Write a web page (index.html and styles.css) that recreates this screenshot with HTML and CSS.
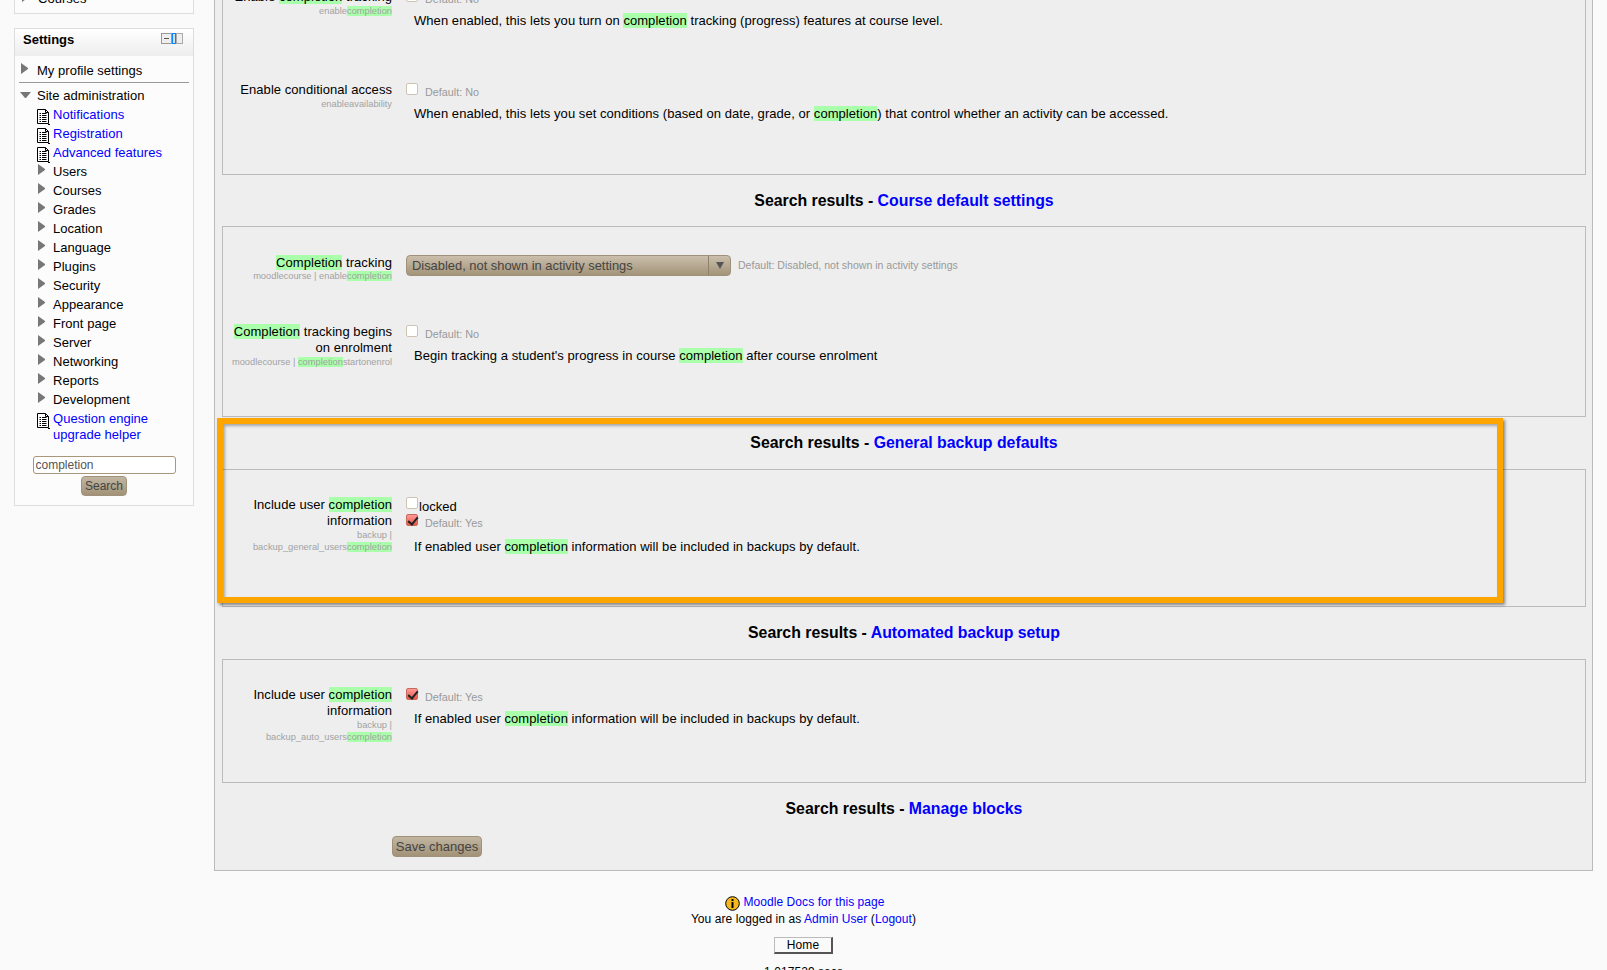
FILE: index.html
```html
<!DOCTYPE html>
<html lang="en">
<head>
<meta charset="utf-8">
<title>Search results</title>
<link rel="stylesheet" href="styles.css">
</head>
<body>
<svg class="defs" width="0" height="0" aria-hidden="true">
  <defs>
    <symbol id="doc" viewBox="0 0 15 17">
      <path d="M1.5 1.5H9.5L12.5 4.5V15.5H1.5Z" fill="#fff" stroke="#000" stroke-width="1"/>
      <path d="M9.5 1.5V4.5H12.5" fill="none" stroke="#000" stroke-width="1"/>
      <path d="M3.5 5.5H5M6 5.5H10.5M3.5 7.5H5M6 7.5H10.5M3.5 9.5H5M6 9.5H10.5M3.5 11.5H5M6 11.5H10.5M3.5 13.5H5M6 13.5H10.5" stroke="#000" stroke-width="1"/>
      <path d="M12 16.5H14" fill="none" stroke="#000" stroke-width="1"/>
    </symbol>
  </defs>
</svg>
<div class="page">
  <div class="columns">
    <aside class="sidebar">
      <section class="block nav-block">
        <div class="tree-row top"><span class="arrow"></span><span>Courses</span></div>
      </section>
      <section class="block settings">
        <header class="block-head">
          <h2>Settings</h2>
          <svg class="dock" width="23" height="12" viewBox="0 0 23 12">
            <rect x="0.5" y="0.5" width="10" height="10" fill="#eee" stroke="#999"/>
            <path d="M3 5.5H8" stroke="#555"/>
            <rect x="11.5" y="0.5" width="3" height="10" fill="#cde" stroke="#0a84ff"/>
            <rect x="15.5" y="0.5" width="6" height="10" fill="#eee" stroke="#aaa"/>
          </svg>
        </header>
        <div class="block-body">
          <div class="tree-row top"><span class="arrow"></span><span>My profile settings</span></div>
          <hr class="tree-sep">
          <div class="tree-row top"><span class="arrow open"></span><span>Site administration</span></div>
          <div class="tree-row child"><svg class="doc-icon"><use href="#doc"/></svg><a href="#">Notifications</a></div>
          <div class="tree-row child"><svg class="doc-icon"><use href="#doc"/></svg><a href="#">Registration</a></div>
          <div class="tree-row child"><svg class="doc-icon"><use href="#doc"/></svg><a href="#">Advanced features</a></div>
          <div class="tree-row child"><span class="arrow"></span><span>Users</span></div>
          <div class="tree-row child"><span class="arrow"></span><span>Courses</span></div>
          <div class="tree-row child"><span class="arrow"></span><span>Grades</span></div>
          <div class="tree-row child"><span class="arrow"></span><span>Location</span></div>
          <div class="tree-row child"><span class="arrow"></span><span>Language</span></div>
          <div class="tree-row child"><span class="arrow"></span><span>Plugins</span></div>
          <div class="tree-row child"><span class="arrow"></span><span>Security</span></div>
          <div class="tree-row child"><span class="arrow"></span><span>Appearance</span></div>
          <div class="tree-row child"><span class="arrow"></span><span>Front page</span></div>
          <div class="tree-row child"><span class="arrow"></span><span>Server</span></div>
          <div class="tree-row child"><span class="arrow"></span><span>Networking</span></div>
          <div class="tree-row child"><span class="arrow"></span><span>Reports</span></div>
          <div class="tree-row child"><span class="arrow"></span><span>Development</span></div>
          <div class="tree-row child wrap"><svg class="doc-icon"><use href="#doc"/></svg><a href="#">Question engine<br>upgrade helper</a></div>
          <form class="side-search">
            <input class="side-input" type="text" value="completion">
            <button class="btn small" type="button">Search</button>
          </form>
        </div>
      </section>
    </aside>

    <main class="panel">
      <fieldset class="group">
        <div class="setting h93">
          <div class="label"><span class="name">Enable <mark>completion</mark> tracking</span><span class="sub">enable<mark>completion</mark></span></div>
          <div class="control">
            <div class="ctl-line"><input type="checkbox" class="cb"><span class="default">Default: No</span></div>
            <p class="desc">When enabled, this lets you turn on <mark>completion</mark> tracking (progress) features at course level.</p>
          </div>
        </div>
        <div class="setting h92">
          <div class="label"><span class="name">Enable conditional access</span><span class="sub">enableavailability</span></div>
          <div class="control">
            <div class="ctl-line"><input type="checkbox" class="cb"><span class="default">Default: No</span></div>
            <p class="desc">When enabled, this lets you set conditions (based on date, grade, or <mark>completion</mark>) that control whether an activity can be accessed.</p>
          </div>
        </div>
      </fieldset>

      <h3 class="result-head">Search results - <a href="#">Course default settings</a></h3>
      <fieldset class="group">
        <div class="setting h70">
          <div class="label"><span class="name"><mark>Completion</mark> tracking</span><span class="sub">moodlecourse | enable<mark>completion</mark></span></div>
          <div class="control">
            <div class="ctl-line select-line">
              <div class="select"><span class="select-text">Disabled, not shown in activity settings</span><span class="select-arrow"></span></div>
              <span class="default">Default: Disabled, not shown in activity settings</span>
            </div>
          </div>
        </div>
        <div class="setting h92">
          <div class="label"><span class="name"><mark>Completion</mark> tracking begins on enrolment</span><span class="sub">moodlecourse | <mark>completion</mark>startonenrol</span></div>
          <div class="control">
            <div class="ctl-line"><input type="checkbox" class="cb"><span class="default">Default: No</span></div>
            <p class="desc">Begin tracking a student's progress in course <mark>completion</mark> after course enrolment</p>
          </div>
        </div>
      </fieldset>

      <h3 class="result-head tall">Search results - <a href="#">General backup defaults</a></h3>
      <fieldset class="group">
        <div class="setting h109">
          <div class="label"><span class="name">Include user <mark>completion</mark> information</span><span class="sub">backup | backup_general_users<mark>completion</mark></span></div>
          <div class="control">
            <div class="locked-line"><input type="checkbox" class="cb"><span>locked</span></div>
            <div class="ctl-line after-locked"><input type="checkbox" class="cb on" checked><span class="default">Default: Yes</span></div>
            <p class="desc">If enabled user <mark>completion</mark> information will be included in backups by default.</p>
          </div>
        </div>
      </fieldset>

      <h3 class="result-head tall">Search results - <a href="#">Automated backup setup</a></h3>
      <fieldset class="group">
        <div class="setting h95">
          <div class="label"><span class="name">Include user <mark>completion</mark> information</span><span class="sub">backup | backup_auto_users<mark>completion</mark></span></div>
          <div class="control">
            <div class="ctl-line"><input type="checkbox" class="cb on" checked><span class="default">Default: Yes</span></div>
            <p class="desc">If enabled user <mark>completion</mark> information will be included in backups by default.</p>
          </div>
        </div>
      </fieldset>

      <h3 class="result-head">Search results - <a href="#">Manage blocks</a></h3>
      <div class="submit-row"><button class="btn save" type="button">Save changes</button></div>

      <div class="highlight-frame"></div>
    </main>
  </div>

  <footer class="footer">
    <div class="foot-line docs">
      <svg class="info" width="15" height="15" viewBox="0 0 15 15">
        <circle cx="7.5" cy="7.5" r="6.8" fill="#f5b81e" stroke="#000" stroke-width="1"/>
        <rect x="6.5" y="3" width="2" height="2" fill="#000"/>
        <rect x="6.5" y="6" width="2" height="6" fill="#000"/>
      </svg><a href="#">Moodle Docs for this page</a>
    </div>
    <div class="foot-line">You are logged in as <a href="#">Admin User</a> (<a href="#">Logout</a>)</div>
    <div class="home-wrap"><span class="home">Home</span></div>
    <div class="foot-line timing">1.017529 secs</div>
  </footer>
</div>
</body>
</html>
```
FILE: styles.css
```css
* { box-sizing: border-box; }
html, body { margin: 0; height: 970px; overflow: hidden; background: #fafafa; }
body { font-family: "Liberation Sans", Arial, sans-serif; font-size: 13px; color: #000; line-height: 16px; letter-spacing: .055px; }
.defs { position: absolute; }
a { color: #0000ff; text-decoration: none; }
mark { background: #aaffaa; color: inherit; }

.page { margin-top: -60px; }
.columns { display: flex; align-items: flex-start; }

/* sidebar */
.sidebar { width: 214px; flex: none; padding-left: 14px; padding-right: 20px; }
.block { border: 1px solid #ddd; background: #fcfcfc; }
.nav-block { height: 74px; padding: 48px 0 0 5px; margin-bottom: 14px; }
.settings { height: 478px; }
.block-head { height: 27px; display: flex; justify-content: space-between; padding: 3px 9px 0 8px; background: linear-gradient(#ffffff, #ededed); }
.block-head h2 { margin: 0; font-size: 13px; line-height: 15px; font-weight: bold; letter-spacing: 0; }
.dock { margin-top: 1px; flex: none; }
.block-body { padding: 5px 4px 0 4px; }
.tree-row { display: flex; align-items: flex-start; line-height: 19px; height: 19px; letter-spacing: .03px; }
.tree-row.top { padding-left: 2px; }
.tree-row.child { padding-left: 19px; }
.tree-row.wrap { height: 32px; line-height: 16px; padding-top: 2px; }
.tree-row .arrow { flex: none; width: 7px; height: 11px; margin-top: 2px; margin-right: 9px; border-left: 7px solid #777; border-top: 5.5px solid transparent; border-bottom: 5.5px solid transparent; }
.tree-row.child .arrow { margin-right: 8px; }
.tree-row .arrow.open { width: 11px; height: 6px; margin: 6px 6px 0 -1px; border-top: 6px solid #777; border-left: 5.5px solid transparent; border-right: 5.5px solid transparent; border-bottom: 0; }
.doc-icon { flex: none; width: 15px; height: 17px; margin: 3px 2px 0 -2px; }
.tree-row.wrap .doc-icon { margin-top: 1px; }
.tree-sep { border: 0; border-top: 1px solid #999; margin: 2px 0 3px 0; height: 0; }
.side-search { display: flex; flex-direction: column; align-items: center; padding-top: 15px; }
.side-input { width: 143px; height: 18px; margin: 0 0 2px 0; padding: 0 2px; border: 1px solid #a8977a; border-radius: 3px; background: #fff; font: 12px "Liberation Sans", Arial, sans-serif; color: #555; }

.btn { border: 1px solid #a0917a; border-radius: 4px; background: linear-gradient(#c2b6a2, #a29277); color: #444; font: 13px/19px "Liberation Sans", Arial, sans-serif; padding: 0; height: 21px; }
.btn.save { width: 90px; }
.btn.small { font-size: 12px; width: 46px; height: 20px; }

/* main */
.panel { position: relative; flex: none; width: 1379px; height: 931px; padding: 21px 6px 0 7px; background: #eeeeee; border: 1px solid #bbb; border-top: 0; }
.group { margin: 0; padding: 27px 0 0 0; border: 1px solid #bbb; min-width: 0; }
.result-head { margin: 0; height: 51px; padding-top: 17px; text-align: center; font-size: 15.85px; line-height: 18px; font-weight: bold; letter-spacing: 0; }
.result-head.tall { height: 52px; }
.setting { display: flex; }
.h93 { height: 93px; }
.h92 { height: 92px; }
.h70 { height: 70px; }
.h109 { height: 109px; }
.h95 { height: 95px; }
.label { flex: none; width: 162px; margin-left: 7px; margin-right: 14px; text-align: right; }
.name { display: block; }
.h70 .name { padding-top: 1px; margin-bottom: -1px; }
.sub { display: block; font-size: 9.3px; line-height: 12px; color: #a2a2a2; letter-spacing: 0; }
.control { flex: 1; min-width: 0; }
.ctl-line { display: flex; align-items: flex-start; height: 24px; }
.ctl-line.after-locked { height: 26px; }
.select-line { padding-top: 1px; }
.locked-line { display: flex; align-items: flex-start; height: 16px; line-height: 20px; }
.locked-line .cb { margin-top: 0; }
.cb { appearance: none; flex: none; display: block; position: relative; width: 12px; height: 12px; margin: 1px 1px 0 0; border: 1px solid #cfc4b2; border-radius: 2px; background: #fff; }
.cb.on { border-color: #c9695a; background: linear-gradient(#f99, #e85a4a); }
.cb.on::before { content: ""; position: absolute; left: 3px; top: 0; width: 4px; height: 8px; border: solid #222; border-width: 0 2px 2px 0; transform: rotate(40deg); }
.default { margin-left: 6px; font-size: 10.8px; line-height: 14px; padding-top: 3px; color: #999; letter-spacing: 0; }
.desc { margin: 0 0 0 8px; line-height: 16px; }
.select { display: flex; width: 325px; height: 21px; border: 1px solid #a0917a; border-radius: 4px; background: linear-gradient(#cbbfac, #a39479); color: #444; font-size: 12.9px; letter-spacing: 0; line-height: 19px; padding-left: 5px; }
.select-text { flex: 1; }
.select-arrow { flex: none; width: 22px; border-left: 1px solid #8f8068; position: relative; }
.select-arrow::before { content: ""; position: absolute; left: 7px; top: 6px; border-top: 7px solid #555; border-left: 4px solid transparent; border-right: 4px solid transparent; }
.select-line .default { margin-left: 7px; font-size: 10.55px; padding-top: 3px; }
.submit-row { padding: 2px 0 0 170px; }

.highlight-frame { position: absolute; left: 2px; top: 478px; width: 1286px; height: 185px; border: 6px solid #ffa500; box-shadow: 2px 2px 3px rgba(0,0,0,.45), inset 2px 2px 3px rgba(0,0,0,.3); pointer-events: none; }

/* footer */
.footer { padding-top: 23px; text-align: center; font-size: 12px; letter-spacing: .07px; }
.foot-line { line-height: 16.5px; }
.foot-line.docs { padding-left: 3px; }
.info { vertical-align: -5px; margin-right: 3px; }
.home-wrap { padding-top: 9px; height: 36px; }
.home { display: inline-block; width: 59px; height: 17px; line-height: 15px; background: #fafafa; border: 1px solid #bbb; border-right: 2px solid #555; border-bottom: 2px solid #555; font-size: 12px; }
```
